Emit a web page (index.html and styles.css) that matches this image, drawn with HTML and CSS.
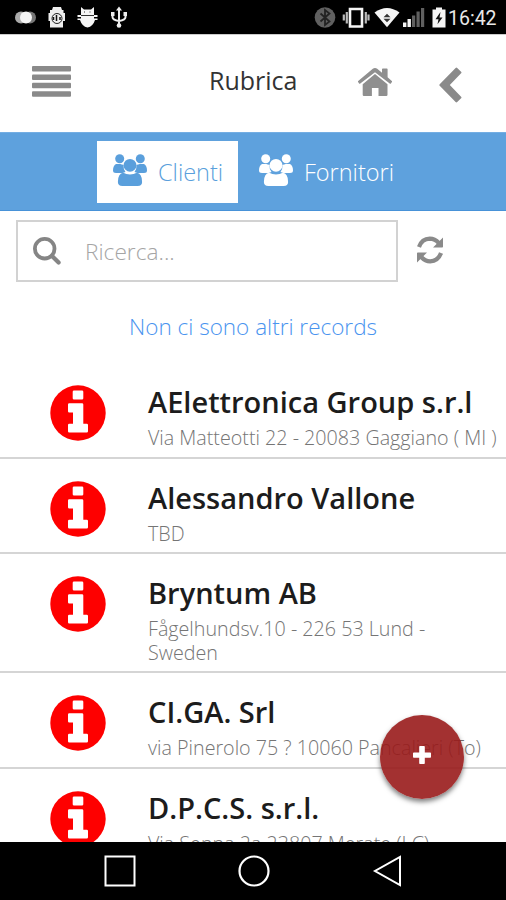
FILE: index.html
```html
<!DOCTYPE html>
<html lang="it">
<head>
    <meta charset="UTF-8">
    <meta name="viewport" content="width=device-width, initial-scale=1.0">
    <title>Rubrica</title>
    <link rel="stylesheet" href="styles.css">
</head>
<body>
    <!-- Shared icons -->
    <svg class="sprite" width="0" height="0">
        <symbol id="info" viewBox="0 0 56 56">
            <circle cx="28" cy="28" r="27.7" fill="#fe0000"/>
            <path fill="#fff" d="M24 5.500h8q1.300 0 1.300 1.300v6.400q0 1.300-1.300 1.300h-8q-1.300 0-1.300-1.300V6.800q0-1.300 1.300-1.300zM19.300 18.300h12.700q1.300 0 1.300 1.300v19.200h3.400q1.300 0 1.300 1.300v6.200q0 1.300-1.300 1.300H19.300q-1.300 0-1.300-1.300v-6.200q0-1.300 1.300-1.300h3.700V27.500h-3.700q-1.300 0-1.300-1.300v-6.600q0-1.300 1.300-1.300z"/>
        </symbol>
        <symbol id="users" viewBox="0 0 34 32">
            <g fill="currentColor">
                <circle cx="6.700" cy="4.800" r="4.500"/>
                <circle cx="27.300" cy="4.800" r="4.500"/>
                <path d="M3 10h4.300q2 1 3.200.8-.3 4.500 2 7.100-1.500.2-3 1.100H3Q0 19 0 16.500 0 11.500 3 10zM31 10h-4.300q-2 1-3.200.8.300 4.500-2 7.100 1.500.2 3 1.100H31q3 0 3-2.500Q34 11.500 31 10z"/>
                <circle cx="17" cy="11.300" r="6.400"/>
                <path d="M10.300 18.800q2.800 1.600 6.700 1.600t6.700-1.600q5.400.8 5.400 9.100 0 4.100-4.500 4.100H9.400q-4.500 0-4.500-4.100 0-8.300 5.400-9.100z"/>
            </g>
        </symbol>
    </svg>

    <div id="container">
        <div class="status-bar">
            <svg class="status-left" width="130" height="34" viewBox="0 0 130 34">
                <circle cx="21" cy="17.500" r="6" fill="#aaa"/>
                <circle cx="30" cy="17.500" r="6" fill="#777"/>
                <circle cx="26" cy="17.500" r="6" fill="#f5f5f5"/>
                <!-- clock -->
                <path fill="#eee" d="M53 7h8l1 3h1.500v3H65v8h-2v6.500H50V21h-1.500v-8H50v-3h2z"/>
                <circle cx="57" cy="18.500" r="5" fill="none" stroke="#222" stroke-width="1"/>
                <path stroke="#111" stroke-width="1.500" d="M56.500 15v6M53.500 17v3M60 17v3"/>
                <!-- cat -->
                <path fill="#f5f5f5" d="M81 7l3 2.500h7L94 7v8h3.500v2H94v1.500h3.500v1.500H95q-2 6.500-7.500 7.500-5.500-1-7.500-7.500h-2.500v-1.500H81V17h-3.500v-2H81z"/>
                <path stroke="#333" d="M81 15.500h13M84.500 11.500v1M90 11.500v1"/>
                <!-- usb -->
                <path fill="none" stroke="#eee" stroke-width="2" d="M119 9v17M112.500 13v4q0 3 6.500 4 6.500-1 6.500-4v-4"/>
                <path fill="#eee" d="M119 6.500l3 4h-6zM111 12h3.500v4H111zM123.500 12h3.500v4h-3.500z"/>
                <circle cx="119" cy="25.500" r="2.300" fill="#eee"/>
            </svg>
            <div class="status-right">
                <svg width="134" height="34" viewBox="312 0 134 34">
                    <circle cx="325" cy="17.500" r="10.300" fill="#606060"/>
                    <path fill="none" stroke="#222" stroke-width="1.800" d="M320.500 13.500l9 8-4.500 3.500V10l4.500 3.500-9 8"/>
                    <!-- vibrate -->
                    <path fill="none" stroke="#f5f5f5" stroke-width="2.600" d="M350 9h12v17.500h-12z"/>
                    <path stroke="#bbb" stroke-width="2.200" d="M346.800 12v11.500M343.800 14.500v6M365.800 12v11.500M368.500 14.500v6"/>
                    <!-- wifi -->
                    <path fill="#f5f5f5" d="M374.500 12.500q12.500-9 25 0L387 27.300z"/>
                    <path fill="#333" d="M383.500 17.200l3.500-3.400 3.500 3.400zM383.500 18.800l3.500 3.400 3.500-3.400z"/>
                    <!-- signal -->
                    <path fill="#f5f5f5" d="M403 22.500h3.400V27H403zM407.500 19h3.400v8h-3.400z"/>
                    <path fill="#606060" d="M412 15.500h3.200V27H412zM416.500 11.500h3.200V27h-3.200zM421 8h3.200v19H421z"/>
                    <!-- battery -->
                    <path fill="#f5f5f5" d="M436 7.500h6v2h3.500v18h-13v-18h3.500z"/>
                    <path fill="#111" d="M440.500 12l-5 7.200h3l-1 5 5-6.700h-3z"/>
                </svg>
                <span class="time">16:42</span>
            </div>
        </div>

        <div class="top-bar">
            <svg class="menu-icon" width="39" height="31" viewBox="0 0 39 31">
                <g fill="#8a8a8a">
                    <rect width="39" height="5.500" rx="1"/>
                    <rect y="8.400" width="39" height="5.500" rx="1"/>
                    <rect y="16.800" width="39" height="5.500" rx="1"/>
                    <rect y="25.200" width="39" height="5.500" rx="1"/>
                </g>
            </svg>
            <div class="title">Rubrica</div>
            <svg class="home-icon" width="34" height="28" viewBox="0 0 34 28">
                <path fill="#8f8f8f" d="M17 6l12.500 10.300v10.500q0 1.200-1.200 1.200h-7.800v-8h-6.600v8H5.900q-1.200 0-1.200-1.200V16.300z"/>
                <path fill="#8f8f8f" d="M17 0q1.200 0 2.200.8l4.800 4V1.200q0-.8.800-.8h4q.8 0 .8.800v8.100l4.200 3.700q.6.500.1 1.100l-1 1.300q-.5.600-1.200.1L17 4.300 2.300 15.500q-.7.500-1.200-.1l-1-1.300q-.5-.6.100-1.100L14.800.8Q15.800 0 17 0z"/>
            </svg>
            <svg class="back-icon" width="23" height="36" viewBox="0 0 23 36">
                <path fill="#8a8a8a" d="M16.600 1q.8-.8 1.600 0l3.900 3.700q.8.800 0 1.600L10.800 18l11.300 11.700q.8.800 0 1.600L18.200 35q-.8.800-1.600 0L.7 18.800q-.8-.8 0-1.600z"/>
            </svg>
        </div>

        <div class="tabs">
            <div class="tab active">
                <svg width="34" height="32"><use href="#users"/></svg>
                <span>Clienti</span>
            </div>
            <div class="tab">
                <svg width="34" height="32"><use href="#users"/></svg>
                <span>Fornitori</span>
            </div>
        </div>

        <div class="search-row">
            <div class="search-box">
                <svg width="28" height="28" viewBox="0 0 28 28">
                    <circle cx="11.700" cy="11.700" r="9.800" fill="none" stroke="#858585" stroke-width="3.800"/>
                    <path stroke="#858585" stroke-width="4.200" stroke-linecap="round" d="M19 19l6.600 6.600"/>
                </svg>
                <input type="text" id="search-bar" placeholder="Ricerca...">
            </div>
            <svg class="refresh-icon" width="28" height="28" viewBox="0 0 28 28">
                <path fill="none" stroke="#8a8a8a" stroke-width="4.200" d="M3 11Q5.800 3 13.800 2.700q5 0 9 4.300M25 17q-2.800 8-10.800 8.300-5 0-9-4.300"/>
                <path fill="#8a8a8a" d="M27 1.500v9.200q0 .8-.8.800H17zM1 26.500v-9.200q0-.8.800-.8H11z"/>
            </svg>
        </div>

        <div class="message">Non ci sono altri records</div>

        <div class="list">
            <div class="item">
                <svg class="item-icon"><use href="#info"/></svg>
                <div class="item-text">
                    <div class="name">AElettronica Group s.r.l</div>
                    <div class="address">Via Matteotti 22 - 20083 Gaggiano ( MI )</div>
                </div>
            </div>
            <div class="item">
                <svg class="item-icon"><use href="#info"/></svg>
                <div class="item-text">
                    <div class="name">Alessandro Vallone</div>
                    <div class="address">TBD</div>
                </div>
            </div>
            <div class="item">
                <svg class="item-icon"><use href="#info"/></svg>
                <div class="item-text">
                    <div class="name">Bryntum AB</div>
                    <div class="address">Fågelhundsv.10 - 226 53 Lund -<br>Sweden</div>
                </div>
            </div>
            <div class="item">
                <svg class="item-icon"><use href="#info"/></svg>
                <div class="item-text">
                    <div class="name">CI.GA. Srl</div>
                    <div class="address">via Pinerolo 75 ? 10060 Pancalieri (To)</div>
                </div>
            </div>
            <div class="item">
                <svg class="item-icon"><use href="#info"/></svg>
                <div class="item-text">
                    <div class="name">D.P.C.S. s.r.l.</div>
                    <div class="address">Via Senna 2a 23807 Merate (LC)</div>
                </div>
            </div>
        </div>

        <!-- Floating add button -->
        <div class="add-button">
            <svg width="18" height="18" viewBox="0 0 18 18">
                <path fill="#fff" d="M7 0h4q.8 0 .8.800v5.700h5.400q.8 0 .8.800v3.600q0 .8-.8.800h-5.400v5.500q0 .8-.8.800H7q-.8 0-.8-.8v-5.500H.8q-.8 0-.8-.8V7.300q0-.8.800-.8h5.400V.8Q6.200 0 7 0z"/>
            </svg>
        </div>

        <div class="bottom-nav">
            <svg width="32" height="32" viewBox="0 0 32 32"><path fill="none" stroke="#fff" stroke-width="2" d="M1.500 1.500h29v29h-29z"/></svg>
            <svg width="32" height="32" viewBox="0 0 32 32"><circle cx="16" cy="16" r="14.500" fill="none" stroke="#fff" stroke-width="2.200"/></svg>
            <svg width="32" height="32" viewBox="0 0 32 32"><path fill="none" stroke="#fff" stroke-width="2" d="M28 2v28L3 16z"/></svg>
        </div>
    </div>
</body>
</html>
```
FILE: styles.css
```css
body {
    margin: 0;
    padding: 0;
    background-color: #fff;
    font-family: 'Open Sans', sans-serif;
}

.sprite {
    position: absolute;
}

#container {
    position: relative;
    width: 506px;
    height: 900px;
    overflow: hidden;
    display: flex;
    flex-direction: column;
}

#container > div {
    flex-shrink: 0;
}

svg {
    display: block;
    flex-shrink: 0;
}

.status-bar {
    height: 34px;
    background-color: #000;
    display: flex;
    justify-content: space-between;
}

.status-right {
    display: flex;
    align-items: center;
    width: 194px;
}

.time {
    margin: 3px 0 0 2px;
    color: #e8e8e8;
    font-family: Roboto, sans-serif;
    font-size: 19.5px;
    line-height: 34px;
}

.top-bar {
    height: 98px;
    box-sizing: border-box;
    border-top: 1px solid #ccc;
    padding-left: 32px;
    display: flex;
    align-items: flex-start;
}

.menu-icon {
    margin-top: 31px;
}

.title {
    margin: 26px 0 0 138px;
    width: 149px;
    font-size: 25px;
    line-height: 39px;
    color: #333;
    white-space: nowrap;
}

.home-icon {
    margin-top: 33px;
}

.back-icon {
    margin: 32px 0 0 47px;
}

.tabs {
    height: 79px;
    box-sizing: border-box;
    padding-left: 97px;
    background-color: #5ea1dd;
    border-top: 1px solid #74aee3;
    border-bottom: 1px solid #4792d8;
    display: flex;
    align-items: center;
    gap: 5px;
}

.tab {
    height: 62px;
    box-sizing: border-box;
    padding: 0 15px 0 16px;
    display: flex;
    align-items: center;
    gap: 11px;
    color: #fff;
    font-size: 23.5px;
    font-weight: 300;
}

.tab.active {
    width: 141px;
    background-color: #fff;
    color: #5a9fdc;
}

.tab svg {
    margin-top: -4px;
}

.search-row {
    height: 71px;
    box-sizing: border-box;
    padding: 9px 0 0 16px;
    display: flex;
    align-items: flex-start;
}

.search-box {
    width: 382px;
    height: 62px;
    box-sizing: border-box;
    border: 2px solid #d2d2d2;
    padding-left: 15px;
    display: flex;
    align-items: center;
}

#search-bar {
    border: none;
    outline: none;
    margin: 0 0 0 24px;
    padding: 0;
    width: 260px;
    font: 300 22.7px 'Open Sans', sans-serif;
    background: none;
}

#search-bar::placeholder {
    color: #a5a5a5;
    opacity: 1;
}

.refresh-icon {
    margin: 16px 0 0 18px;
}

.message {
    height: 81px;
    line-height: 90px;
    text-align: center;
    color: #4a94ef;
    font-size: 22.5px;
    font-weight: 300;
    white-space: nowrap;
}

.list {
    height: 479px;
    overflow: hidden;
}

.item {
    min-height: 95.7px;
    box-sizing: border-box;
    border-bottom: 2px solid #d5d5d5;
    padding: 22px 0 6px 50px;
    display: flex;
    align-items: flex-start;
}

.item-icon {
    width: 56px;
    height: 56px;
}

.item-text {
    margin: -1px 0 0 42px;
    white-space: nowrap;
}

.name {
    font-size: 29px;
    font-weight: 600;
    line-height: 36px;
    color: #1c1c1c;
}

.address {
    margin-top: 6px;
    font-size: 19.7px;
    font-weight: 300;
    line-height: 24px;
    color: #757575;
}

.add-button {
    position: absolute;
    left: 380px;
    top: 715px;
    width: 84px;
    height: 84px;
    border-radius: 50%;
    background-color: rgba(153, 27, 27, 0.9);
    box-shadow: 0 3px 5px rgba(0, 0, 0, 0.5);
    display: flex;
    align-items: center;
    justify-content: center;
}

.add-button svg {
    margin-top: -4px;
}

.bottom-nav {
    height: 58px;
    box-sizing: border-box;
    padding-left: 2px;
    background-color: #000;
    display: flex;
    align-items: center;
    justify-content: center;
    gap: 102px;
}
```
